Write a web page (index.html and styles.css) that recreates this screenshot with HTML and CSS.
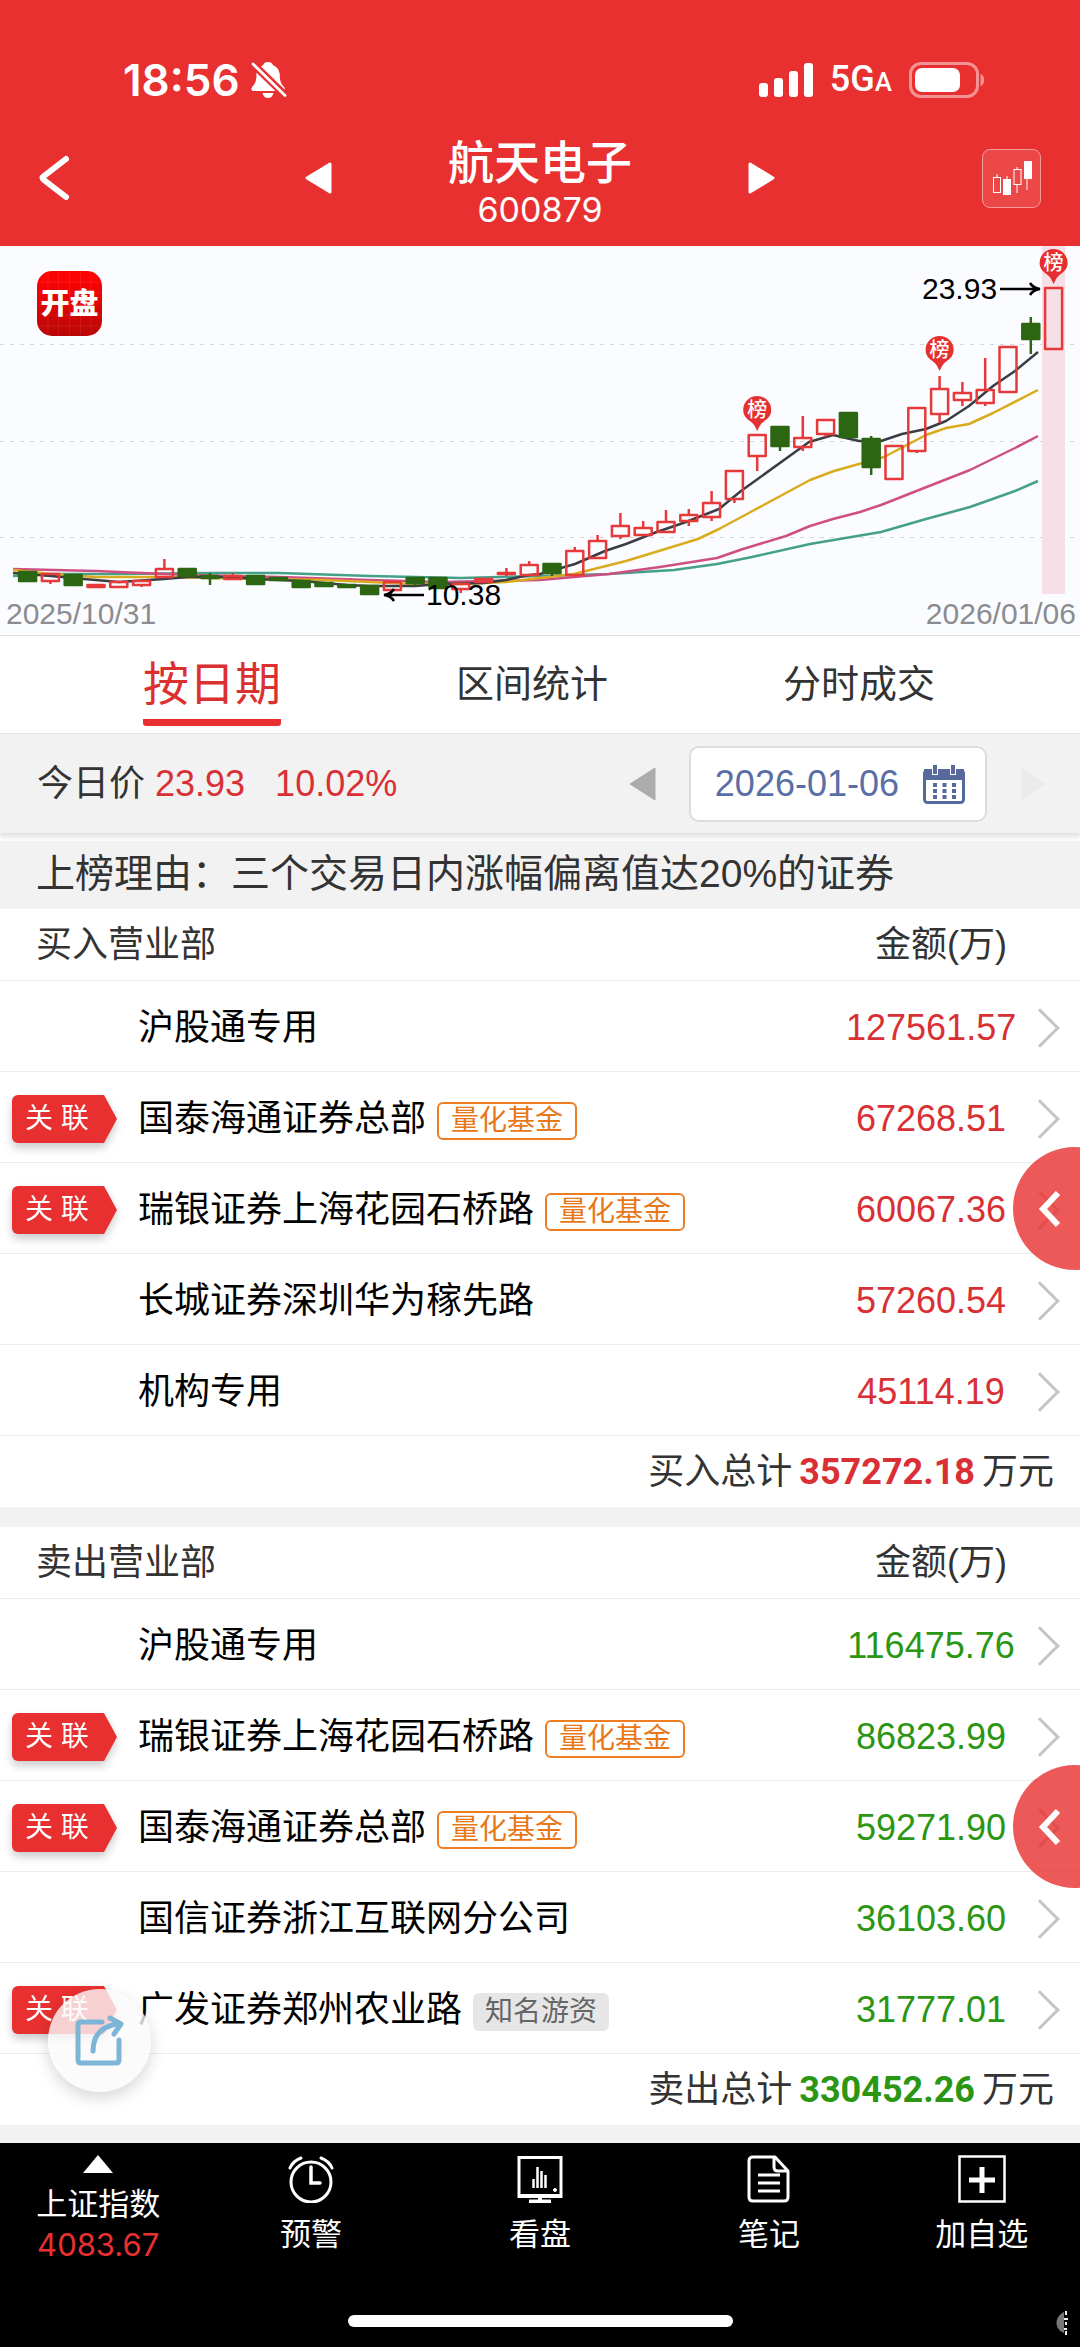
FILE: index.html
```html
<!DOCTYPE html>
<html lang="zh-CN">
<head>
<meta charset="utf-8">
<meta name="viewport" content="width=device-width, initial-scale=1">
<title>航天电子 600879 龙虎榜</title>
<link rel="stylesheet" href="styles.css">
</head>
<body>
<div class="app">
  <header class="header">
    <div class="status">
      <div class="status-group status-left">
        <span class="clock">18:56</span>
        <svg class="bell" width="38" height="38" viewBox="0 0 38 38" aria-hidden="true">
          <path fill="#fff" d="M18 1c2.600 0 4.200 1.200 5 3.200 4.500 1.800 6.800 5.600 6.800 10.300 0 5 1 8 4.200 11.500 1.200 1.400 1.200 4-1.400 4H3.600c-2.400 0-2.800-2.600-1.400-4 3.200-3.400 4.200-6.500 4.200-11.500 0-4.700 2.200-8.500 6.600-10.300C13.800 2.200 15.400 1 18 1zM12.500 32h11c-.6 3-2.600 5-5.500 5s-4.900-2-5.500-5z"/>
          <path stroke="#e83030" stroke-width="7.500" d="M1 1l36 35"/>
          <path stroke="#fff" stroke-width="2.800" stroke-linecap="round" d="M3 3l32 31.500"/>
        </svg>
      </div>
      <div class="status-group status-right">
        <svg width="54" height="34" viewBox="0 0 54 34" fill="#fff" aria-hidden="true">
          <rect y="20" width="9" height="14" rx="3"/><rect x="15" y="15" width="9" height="19" rx="3"/><rect x="30" y="8" width="9" height="26" rx="3"/><rect x="45" width="9" height="34" rx="3"/>
        </svg>
        <span class="network">5G<small>A</small></span>
        <svg width="76" height="36" viewBox="0 0 76 36" aria-hidden="true">
          <rect x="1.500" y="1.500" width="67" height="33" rx="10.500" fill="none" stroke="#f59292" stroke-width="3"/>
          <rect x="6" y="6" width="45" height="24" rx="7" fill="#fff"/>
          <path fill="#f59292" d="M71.500 12c5 1 5 11 0 12z"/>
        </svg>
      </div>
    </div>
    <nav class="nav">
      <button class="icon-btn nav-back" aria-label="返回">
        <svg width="32" height="46" viewBox="0 0 32 46"><path d="M27 4L5 21q-3 2 0 4l22 17" fill="none" stroke="#fff" stroke-width="6" stroke-linecap="round" stroke-linejoin="round"/></svg>
      </button>
      <div class="stock">
        <button class="icon-btn" aria-label="上一只"><svg width="27" height="32" viewBox="0 0 27 32"><path d="M25 2v28L2 16z" fill="#fff" stroke="#fff" stroke-width="3" stroke-linejoin="round"/></svg></button>
        <div class="stock-title"><h1>航天电子</h1><span>600879</span></div>
        <button class="icon-btn" aria-label="下一只"><svg width="27" height="32" viewBox="0 0 27 32"><path d="M2 2v28l23-14z" fill="#fff" stroke="#fff" stroke-width="3" stroke-linejoin="round"/></svg></button>
      </div>
      <button class="icon-btn kline-btn" aria-label="K线">
        <svg width="40" height="36" viewBox="0 0 40 36" fill="none" stroke="#fff">
          <path d="M5 14v3M15 16v3M25 7v3M25 25v8M35 17v13"/>
          <rect x="1.500" y="17.500" width="7" height="15"/><rect x="11.500" y="19.500" width="7" height="15" fill="#fff"/>
          <rect x="22" y="9.500" width="7" height="15"/><rect x="32.500" y="1.500" width="7" height="17" fill="#fff"/>
        </svg>
      </button>
    </nav>
  </header>

  <section class="chart" aria-label="K线图">
    <svg viewBox="0 0 1080 389" font-family="'Liberation Sans','Noto Sans CJK SC',sans-serif">
      <defs>
        <linearGradient id="logo-bg" x1="0" y1="0" x2="0" y2="1"><stop offset="0.150" stop-color="#fb0303"/><stop offset="1" stop-color="#b90606"/></linearGradient>
        <g id="pin"><path fill="#e5302f" d="M-14 0a14 14 0 1 1 28 0c0 6-4 9-8 12-3 2-4 5-6 9-2-4-3-7-6-9-4-3-8-6-8-12z"/></g>
      </defs>
      <path d="M0 98.500H1080M0 195.500H1080M0 291.500H1080" stroke="#d6d6da" stroke-dasharray="4 6" fill="none"/>
      <rect x="1042" y="0" width="23" height="348" fill="#f6dfe6"/>
      <g fill="none" stroke-width="2.500" stroke-linejoin="round">
        <polyline stroke="#45a089" points="13,330 51,328 120,328 210,327 279,327 370,330 461,332 540,330 609,328 674,324 717,318 752,311 810,298 881,286 926,273 970,261 1015,245 1038,235"/>
        <polyline stroke="#cf4f82" points="13,323 96,325 188,329 279,331 370,334 439,336 540,334 574,331 609,328 660,321 717,312 743,303 786,290 810,280 833,273 860,266 881,259 919,244 970,224 1015,202 1038,190"/>
        <polyline stroke="#d9ac1e" points="13,324 51,328 96,331 164,331 210,332 256,333 324,334 370,336 416,338 461,338 506,336 540,332 574,328 626,315 698,293 719,283 747,268 810,234 834,225 884,211 926,189 946,182 969,178 993,167 1038,144"/>
        <polyline stroke="#3b3d44" points="13,327 51,330 84,333 119,336 164,333 188,331 233,331 256,333 302,335 347,339 370,340 416,340 439,338 484,337 506,334 529,329 540,328 561,322 575,318 605,305 626,298 654,287 686,276 719,263 741,245 809,196 833,189 859,195 881,195 902,188 926,183 946,175 969,160 993,140 1015,125 1038,106"/>
      </g>
      <g id="candles" stroke-width="2.500"></g>
      <g id="pins"></g>
      <g fill="none" stroke="#000" stroke-width="2.500">
        <path d="M1000 43h39M1030 37q3 5 10 6-7 1-10 6M424 349h-39M394 343q-3 5-10 6 7 1 10 6"/>
      </g>
      <g font-size="30">
        <text x="922" y="53">23.93</text><text x="426" y="359">10.38</text>
        <text x="6" y="378" fill="#8c8c90">2025/10/31</text><text x="1076" y="378" text-anchor="end" fill="#8c8c90">2026/01/06</text>
      </g>
      <rect x="37" y="25" width="65" height="65" rx="15" fill="url(#logo-bg)"/>
      <path d="M48 26v63M58.500 26v63M69.500 26v63M80.500 26v63M91 26v63M38 36h63M38 47h63M38 58h63M38 69h63M38 80h63" stroke="#fff" stroke-opacity=".08"/>
      <text x="69.500" y="68" font-size="29" font-weight="900" fill="#fff" text-anchor="middle">开盘</text>
    </svg>
  </section>

  <nav class="tabs">
    <a class="tab tab-active" href="#date">按日期</a>
    <a class="tab" href="#range">区间统计</a>
    <a class="tab" href="#tick">分时成交</a>
  </nav>

  <div class="price-bar" id="date">
    <div class="price">今日价<span class="up">23.93</span><span class="up percent">10.02%</span></div>
    <div class="date-picker">
      <button class="icon-btn" aria-label="前一日"><svg width="27" height="34" viewBox="0 0 27 34"><path d="M26 1v32L1 17z" fill="#acacac" stroke="#acacac" stroke-linejoin="round"/></svg></button>
      <button class="date-btn"><span>2026-01-06</span>
        <svg width="42" height="40" viewBox="0 0 42 40" aria-hidden="true">
          <rect x="1.500" y="6.500" width="39" height="32" rx="3" fill="#fff" stroke="#56699a" stroke-width="3"/>
          <path fill="#56699a" d="M1 5h40v11H1z"/>
          <path stroke="#fff" stroke-width="6" d="M12 1v10M30 1v10"/><path stroke="#56699a" stroke-width="4" d="M12 1v9M30 1v9"/>
          <path stroke="#56699a" stroke-width="4" stroke-dasharray="4 5.500" d="M10 21h24M10 27h24M10 33h24"/>
        </svg>
      </button>
      <button class="icon-btn" aria-label="后一日" disabled><svg width="27" height="34" viewBox="0 0 27 34"><path d="M1 1v32l25-16z" fill="#ebebeb"/></svg></button>
    </div>
  </div>

  <p class="reason">上榜理由：三个交易日内涨幅偏离值达20%的证券</p>

  <section class="board">
    <table class="seats seats-buy">
      <colgroup><col class="col-link"><col><col class="col-amount"><col class="col-more"></colgroup>
      <thead><tr><th class="head-dept" colspan="2">买入营业部</th><th class="head-amount">金额(万)</th><th></th></tr></thead>
      <tbody>
        <tr><td></td><td>沪股通专用</td><td class="amount">127561.57</td><td class="more"></td></tr>
        <tr><td><span class="linked"><span>关 联</span></span></td><td>国泰海通证券总部<span class="badge badge-quant">量化基金</span></td><td class="amount">67268.51</td><td class="more"></td></tr>
        <tr><td><span class="linked"><span>关 联</span></span></td><td>瑞银证券上海花园石桥路<span class="badge badge-quant">量化基金</span></td><td class="amount">60067.36</td><td class="more"></td></tr>
        <tr><td></td><td>长城证券深圳华为稼先路</td><td class="amount">57260.54</td><td class="more"></td></tr>
        <tr><td></td><td>机构专用</td><td class="amount">45114.19</td><td class="more"></td></tr>
      </tbody>
    </table>
    <p class="total">买入总计<strong class="up">357272.18</strong>万元</p>
    <button class="drawer" aria-label="展开"><svg width="26" height="38" viewBox="0 0 26 38"><path d="M21 3L6 19l15 16" fill="none" stroke="#fff" stroke-width="6"/></svg></button>
  </section>

  <section class="board">
    <table class="seats seats-sell">
      <colgroup><col class="col-link"><col><col class="col-amount"><col class="col-more"></colgroup>
      <thead><tr><th class="head-dept" colspan="2">卖出营业部</th><th class="head-amount">金额(万)</th><th></th></tr></thead>
      <tbody>
        <tr><td></td><td>沪股通专用</td><td class="amount">116475.76</td><td class="more"></td></tr>
        <tr><td><span class="linked"><span>关 联</span></span></td><td>瑞银证券上海花园石桥路<span class="badge badge-quant">量化基金</span></td><td class="amount">86823.99</td><td class="more"></td></tr>
        <tr><td><span class="linked"><span>关 联</span></span></td><td>国泰海通证券总部<span class="badge badge-quant">量化基金</span></td><td class="amount">59271.90</td><td class="more"></td></tr>
        <tr><td></td><td>国信证券浙江互联网分公司</td><td class="amount">36103.60</td><td class="more"></td></tr>
        <tr><td><span class="linked"><span>关 联</span></span></td><td>广发证券郑州农业路<span class="badge badge-known">知名游资</span></td><td class="amount">31777.01</td><td class="more"></td></tr>
      </tbody>
    </table>
    <p class="total">卖出总计<strong class="down">330452.26</strong>万元</p>
    <button class="drawer" aria-label="展开"><svg width="26" height="38" viewBox="0 0 26 38"><path d="M21 3L6 19l15 16" fill="none" stroke="#fff" stroke-width="6"/></svg></button>
    <button class="share" aria-label="分享">
      <svg width="50" height="52" viewBox="0 0 50 52" fill="none" stroke="#7db5d6" stroke-width="5" stroke-linecap="round" stroke-linejoin="round">
        <path d="M27 7H6q-3 0-3 3v35q0 3 3 3h35q3 0 3-3V25"/><path d="M18 36C18 19 28 11 43 9M35 3l11 6-7 10"/>
      </svg>
    </button>
  </section>

  <footer class="footer">
    <nav class="toolbar">
      <button class="tool tool-index">
        <svg width="30" height="18" viewBox="0 0 30 18"><path d="M15 0l15 18H0z" fill="#fff"/></svg>
        <span>上证指数</span><span class="index-value">4083.67</span>
      </button>
      <button class="tool">
        <svg width="48" height="48" viewBox="0 0 48 48" fill="none" stroke="#fff" stroke-width="3" stroke-linecap="round"><circle cx="24" cy="27" r="20"/><path d="M24 12v16h9" stroke-width="3.500"/><path d="M3 13Q6 6 14 3M45 13Q42 6 34 3"/></svg>
        <span>预警</span>
      </button>
      <button class="tool">
        <svg width="48" height="48" viewBox="0 0 48 48" fill="none" stroke="#fff"><path stroke-width="3" d="M3 2.500h42v39H3z"/><path stroke-width="4" d="M2 41h44M24 41v5M13 46.500h22"/><path stroke-width="2.500" d="M17.500 24v9M21.500 12v21M25.500 16v17M29.500 20v13"/><circle cx="39" cy="35" r="1.500" fill="#fff"/></svg>
        <span>看盘</span>
      </button>
      <button class="tool">
        <svg width="48" height="48" viewBox="0 0 48 48" fill="none" stroke="#fff" stroke-width="3" stroke-linejoin="round"><path d="M8 2h22l13 14v26q0 4-4 4H8q-4 0-4-4V6q0-4 4-4zM29 3v9q0 4 4 4h10"/><path d="M13 20h22M13 28h22M13 36h22"/></svg>
        <span>笔记</span>
      </button>
      <button class="tool">
        <svg width="48" height="48" viewBox="0 0 48 48" fill="none" stroke="#fff"><path stroke-width="2.500" d="M1.500 1.500h45v45h-45z"/><path stroke-width="5" d="M24 12v26M11 25h26"/></svg>
        <span>加自选</span>
      </button>
    </nav>
    <div class="home-indicator"></div>
    <svg class="corner-mark" width="14" height="24" viewBox="0 0 14 24" aria-hidden="true"><path d="M9 1C-1 6-1 18 9 22z" fill="#777"/><path d="M11 0v4M9 8h4M11 11v3M9 18h3M11 20v4" stroke="#eee" stroke-width="2"/></svg>
  </footer>
</div>
<script src="script.js"></script>
</body>
</html>
```
FILE: styles.css
```css
:root {
  --red: #e83030;
  --up: #d93036;
  --down: #2a9614;
  --ink: #333;
  --line: #ececec;
  --panel: #f2f2f2;
}

* { box-sizing: border-box; }

body {
  margin: 0;
  overflow-x: hidden;
  background: var(--panel);
  color: var(--ink);
  font-family: "Liberation Sans", "Noto Sans CJK SC", sans-serif;
  font-size: 36px;
  line-height: 48px;
}

h1, p { margin: 0; font-weight: 400; }
button { padding: 0; border: 0; background: none; color: inherit; font: inherit; cursor: pointer; }
svg { display: block; flex: none; }

.app { display: flex; flex-direction: column; min-height: 100vh; overflow-x: hidden; }
.up { color: var(--up); }
.down { color: var(--down); }

/* Header */
.header { background: var(--red); color: #fff; }
.status { display: flex; justify-content: space-between; height: 110px; padding: 50px 95px 0 123px; font-family: Inter, sans-serif; }
.status-group { display: flex; align-items: center; height: 60px; }
.status-left { gap: 10px; }
.status-right { gap: 17px; }
.clock { font-size: 44px; font-weight: 600; }
.network { font-family: Roboto, sans-serif; font-size: 36px; font-weight: 500; }
.network small { font-size: 26px; }

.nav { display: grid; grid-template-columns: 1fr auto 1fr; align-items: center; height: 136px; padding: 0 39px; }
.icon-btn { display: flex; align-items: center; justify-content: center; }
.nav-back { justify-self: start; }
.stock { display: flex; align-items: center; gap: 116px; }
.stock-title { padding-top: 10px; text-align: center; }
.stock-title h1 { font-size: 46px; font-weight: 500; line-height: 54px; }
.stock-title span { display: block; font-family: Inter, sans-serif; font-size: 34px; line-height: 40px; }
.kline-btn { justify-self: end; width: 59px; height: 59px; border: 1px solid #f69a9a; border-radius: 8px; background: #ec4848; }

/* Chart */
.chart { border-bottom: 1px solid #e3e3e6; background: #fbfcff; }
.chart svg { width: 100%; height: auto; }

/* Tabs */
.tabs { display: flex; justify-content: space-between; height: 97px; padding: 0 145px 0 143px; background: #fff; }
.tab { padding: 23px 0 0; color: #333; font-size: 38px; line-height: 50px; text-decoration: none; }
.tab-active { height: 90px; border-bottom: 7px solid var(--red); border-radius: 3px; color: #dc3030; font-size: 46px; }

/* Price and date */
.price-bar {
  display: flex;
  align-items: center;
  justify-content: space-between;
  height: 100px;
  margin-bottom: 8px;
  padding: 0 33px 0 37px;
  border-top: 1px solid #e2e2e2;
  background: var(--panel);
  box-shadow: 0 4px 4px #e2e2e2, 0 8px 0 #fdfdfd;
}
.price { display: flex; gap: 10px; }
.percent { margin-left: 20px; }
.date-picker { display: flex; align-items: center; gap: 33px; }
.date-btn {
  display: flex;
  align-items: center;
  gap: 24px;
  height: 76px;
  padding: 0 20px 0 24px;
  border: 2px solid #dcdcdc;
  border-radius: 10px;
  background: #fff;
  color: #5a6ea6;
}

.reason { padding: 9px 36px 11px; background: var(--panel); font-size: 39px; }

/* Buy and sell boards */
.board { position: relative; margin-bottom: 20px; background: #fff; }
.board:last-of-type { margin-bottom: 18px; }
.seats { width: 100%; border-collapse: separate; border-spacing: 0; table-layout: fixed; }
.seats th { height: 72px; padding: 0; border-bottom: 1px solid var(--line); font-weight: 400; }
.seats td { height: 91px; padding: 4px 0 0; border-bottom: 1px solid var(--line); color: #000; white-space: nowrap; }
.col-link { width: 138px; }
.col-amount { width: 170px; }
.col-more { width: 64px; }
.seats .head-dept { padding-left: 36px; text-align: left; }
.seats .head-amount { padding-right: 9px; text-align: right; }
.seats .amount { text-align: center; }
.seats-buy .amount { color: var(--up); }
.seats-sell .amount { color: var(--down); }
.seats .more::after {
  content: "";
  display: block;
  width: 25px;
  height: 25px;
  margin-left: 10px;
  border: solid #c4c4c4;
  border-width: 3px 3px 0 0;
  transform: rotate(45deg);
}
.linked { display: block; width: 105px; margin-left: 12px; filter: drop-shadow(0 5px 4px rgba(0, 0, 0, 0.2)); }
.linked > span {
  display: block;
  padding-left: 13px;
  border-radius: 6px;
  background: var(--red);
  clip-path: polygon(0 0, 92px 0, 100% 50%, 92px 100%, 0 100%);
  color: #fff;
  font-size: 28px;
}
.badge { display: inline-block; margin-left: 11px; padding: 0 12px; border-radius: 6px; font-size: 28px; line-height: 38px; vertical-align: middle; }
.badge-quant { border: 2px solid #ee7d22; color: #e87817; line-height: 34px; }
.badge-known { background: #e6e6e6; color: #666; }
.total { display: flex; align-items: center; justify-content: flex-end; gap: 7px; height: 71px; padding-right: 26px; }
.total strong { font-family: Roboto, sans-serif; }

.drawer {
  position: absolute;
  top: 238px;
  right: -56px;
  width: 123px;
  height: 123px;
  padding-left: 24px;
  border-radius: 50%;
  background: rgba(232, 48, 48, 0.8);
}
.share {
  position: absolute;
  top: 462px;
  left: 48px;
  display: flex;
  align-items: center;
  justify-content: center;
  width: 103px;
  height: 103px;
  border-radius: 50%;
  background: rgba(250, 250, 250, 0.8);
  box-shadow: 0 6px 16px rgba(0, 0, 0, 0.16);
}

/* Bottom toolbar */
.footer { position: relative; height: 204px; margin-top: auto; background: #000; color: #fff; }
.toolbar { display: grid; grid-template-columns: 6fr 7fr 7fr 7fr 6fr; }
.tool { display: flex; flex-direction: column; align-items: center; gap: 12px; padding-top: 12px; font-size: 31px; line-height: 40px; }
.tool-index { gap: 0; }
.tool-index svg { margin-bottom: 12px; }
.index-value { color: var(--red); font-family: Inter, sans-serif; }
.home-indicator { position: absolute; bottom: 20px; left: 50%; width: 385px; height: 12px; margin-left: -192px; border-radius: 6px; background: #fff; }
.corner-mark { position: absolute; right: 11px; bottom: 12px; }
```
FILE: script.js
```js
// Each candle: [direction, body top, body bottom, high, low] in chart units.
const candles = [
  ["d",326,335],["u",328,335,328,338],["d",329,339],["u",339,341],["u",336,341],["u",335,339,334,341],
  ["u",323,331,313],["d",323,330],["d",330,332,327,339],["u",330,333,327],["d",330,338],["d",332,334],
  ["d",335,341],["d",337,340],["d",339,341],["d",340,348],["u",336,344],["d",332,337,332,340],
  ["d",332,342],["u",338,343,337,347],["u",333,336],["u",327,328,322,330],["u",319,329,315],
  ["d",318,327,318,330],["u",305,329,301],["u",295,312,289],["u",280,290,267,293],["u",282,289,275],
  ["u",276,286,264],["u",269,275,263,280],["u",257,271,245,275],["u",225,253,225,257],
  ["u",189,210,189,225],["d",181,200,181,205],["u",192,201,170,205],["u",174,188,174,191],
  ["d",167,191],["d",193,221,190,229],["u",200,233],["u",162,205,162,207],["u",143,168,130,177],
  ["u",147,154,136,160],["u",144,157,112,160],["u",101,146],["d",78,93,71,108],["u",42,103]
];
// Days on the ranking list: [candle index, pin centre y].
const listed = [[32, 164], [40, 104], [45, 17]];

const NS = "http://www.w3.org/2000/svg";
const centre = i => 27.6 + i * 22.8;

function add(parent, name, attrs, text) {
  const el = document.createElementNS(NS, name);
  for (const key in attrs) el.setAttribute(key, attrs[key]);
  if (text) el.textContent = text;
  parent.appendChild(el);
}

const layer = document.getElementById("candles");
candles.forEach(([dir, top, bottom, high = top, low = bottom], i) => {
  const x = centre(i);
  const color = dir === "u" ? "#e6393a" : "#2d6613";
  if (high < top) add(layer, "path", { d: `M${x} ${high}V${top}`, stroke: color });
  if (low > bottom) add(layer, "path", { d: `M${x} ${bottom}V${low}`, stroke: color });
  add(layer, "rect", {
    x: x - 8.5, y: top, width: 17, height: bottom - top,
    fill: dir === "u" ? "none" : color, stroke: color, "stroke-linejoin": "round"
  });
});

const pins = document.getElementById("pins");
listed.forEach(([i, y]) => {
  add(pins, "use", { href: "#pin", x: centre(i), y });
  add(pins, "text", { x: centre(i), y: y + 7, "font-size": 20, "font-weight": 500, fill: "#fff", "text-anchor": "middle" }, "榜");
});
```
